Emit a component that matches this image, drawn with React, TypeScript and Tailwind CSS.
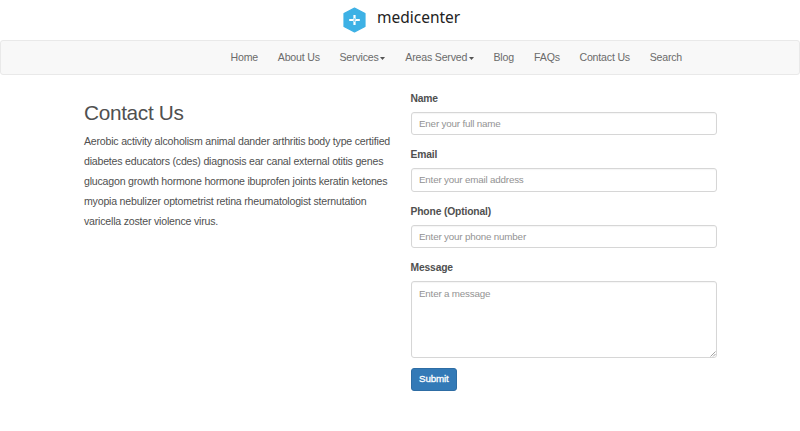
import React from "react";

const navItems = [
  { label: "Home", width: "w-[47.3px]" },
  { label: "About Us", width: "w-[61.7px]" },
  { label: "Services", width: "w-[65.8px]", caret: true },
  { label: "Areas Served", width: "w-[88.2px]", caret: true },
  { label: "Blog", width: "w-[40.6px]" },
  { label: "FAQs", width: "w-[45.4px]" },
  { label: "Contact Us", width: "w-[70.2px]" },
  { label: "Search", width: "w-[40px]" },
];

const lines = [
  "Aerobic activity alcoholism animal dander arthritis body type certified",
  "diabetes educators (cdes) diagnosis ear canal external otitis genes",
  "glucagon growth hormone hormone ibuprofen joints keratin ketones",
  "myopia nebulizer optometrist retina rheumatologist sternutation",
  "varicella zoster violence virus.",
];

const fields = [
  { id: "name", label: "Name", hint: "Ener your full name" },
  { id: "email", label: "Email", hint: "Enter your email address" },
  { id: "phone", label: "Phone (Optional)", hint: "Enter your phone number" },
];

const control =
  "block w-full rounded-[3px] border border-[#d6d6d6] bg-white px-[7.5px] text-[9.8px] tracking-[-0.18px] text-[#555] shadow-[inset_0_1px_1px_rgba(0,0,0,0.04)] placeholder:text-[#939393] placeholder:opacity-100 outline-none";

export default function App() {
  return (
    <div className="h-[431px] w-full overflow-hidden bg-white font-['Liberation_Sans',Arial,sans-serif] text-[#505050]">
      <header className="flex h-[39.5px] pl-[343px] pt-[7px]">
        <svg className="h-[26px] w-[23px] shrink-0" viewBox="0 0 23 26">
          <path d="M11.5 1 22 6.6v12.8L11.5 25 1 19.4V6.6Z" fill="#3eb1e5" stroke="#3eb1e5" strokeWidth="1.2" strokeLinejoin="round" />
          <path d="M11.5 8v10M6.2 13h10.6" stroke="#fff" strokeWidth="2.2" />
          <path d="M10 13.2h1.5v1.8M13 12.8h-1.5V11" fill="none" stroke="#3eb1e5" strokeWidth="0.5" />
        </svg>
        <span className="ml-[11px] mt-[-3px] whitespace-nowrap font-['Noto_Sans',sans-serif] text-[15.5px] leading-[26px] text-[#222]">
          medicenter
        </span>
      </header>
      <nav className="flex h-[35px] items-center rounded-[3px] border border-[#e9e9e9] bg-[#f8f8f8] pl-[229.5px] pt-[1px] text-[10.6px] tracking-[-0.19px] text-[#6b6b6b]">
        {navItems.map((item) => (
          <a key={item.label} className={"flex shrink-0 items-center gap-[1.5px] whitespace-nowrap " + item.width}>
            {item.label}
            {item.caret && (
              <svg className="mt-[2px] h-[3px] w-[5px]" viewBox="0 0 5 3">
                <path d="M0 0h5L2.5 3Z" fill="#555" />
              </svg>
            )}
          </a>
        ))}
      </nav>
      <main className="flex pl-[84px]">
        <section className="w-[326.5px] shrink-0 pt-[25px]">
          <h1 className="text-[20.8px] leading-[26px] tracking-[-0.33px]">Contact Us</h1>
          <p className="mt-[5px] text-[10.6px] leading-[20.1px] tracking-[-0.21px]">
            {lines.map((line) => (
              <span key={line} className="block whitespace-nowrap">{line}</span>
            ))}
          </p>
        </section>
        <form className="w-[306.5px] pt-[17px]">
          {fields.map((field) => (
            <div key={field.id} className="h-[56.6px]">
              <label htmlFor={field.id} className="block h-[20px] text-[10.3px] font-bold leading-[14px] tracking-[-0.15px]">{field.label}</label>
              <input id={field.id} placeholder={field.hint} className={control + " h-[23.5px]"} />
            </div>
          ))}
          <label htmlFor="message" className="block h-[20px] text-[10.3px] font-bold leading-[14.6px] tracking-[-0.15px]">Message</label>
          <div className="relative">
            <textarea id="message" placeholder="Enter a message" className={control + " h-[77px] resize-none pt-[5px] leading-[13px]"} />
            <svg className="absolute bottom-[1px] right-[1px] h-[6px] w-[6px]" viewBox="0 0 6 6">
              <path d="M0.5 5.5 5.5 0.5M3 5.5 5.5 3" stroke="#8c8c8c" strokeWidth="0.8" />
            </svg>
          </div>
          <button type="button" className="mt-[10px] h-[23px] w-[46.5px] rounded-[3px] border border-[#2e6da4] bg-[#337ab7] text-[9.8px] tracking-[-0.18px] text-white [-webkit-text-stroke:0.3px_white]">
            Submit
          </button>
        </form>
      </main>
    </div>
  );
}
